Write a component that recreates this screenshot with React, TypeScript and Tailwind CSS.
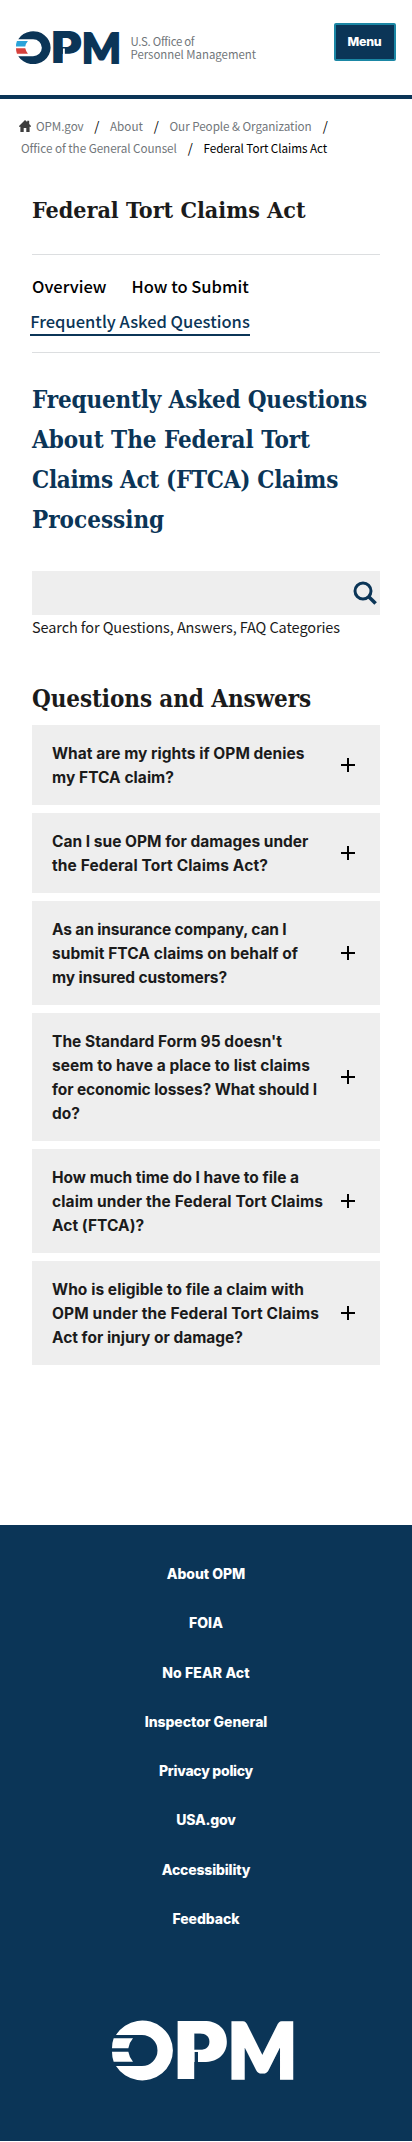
type LogoProps = { ink: string; letter: string; upper: string; lower: string; gap: string; className: string };

function OpmLogo({ ink, letter, upper, lower, gap, className }: LogoProps) {
  return (
    <svg viewBox="0 0 544 181" className={className} role="img" aria-label="OPM" preserveAspectRatio="none">
      <path className={ink} d="M12 45 A92 90 0 1 1 12 138 H90 A46.5 46.5 0 0 0 90 45 Z" />
      <path className={upper} d="M5 55 H63 Q51 69 49 85 H0 Q0 68 5 55 Z" />
      <path className={lower} d="M0 95 H49 Q52 112 63 125 H5 Q0 112 0 95 Z" />
      <g transform="translate(185 178) scale(1.06 1)">
        <text className={`${ink} font-['Inter',sans-serif] text-[238px] font-black`}>P</text>
      </g>
      <rect className={gap} x="248" y="96" width="10" height="85" />
      <g transform="translate(347 173) scale(0.965 1)">
        <text className={`${ink} ${letter} stroke-[11px] font-['Lato',sans-serif] text-[226px] font-black`}>M</text>
      </g>
    </svg>
  );
}

function HomeIcon() {
  return (
    <svg viewBox="0 0 12 12" className="h-3 w-3 fill-[#3d3d3d]" aria-hidden="true">
      <path d="M6 0 L8.2 2.1 V0.8 H10.2 V4 L12 5.9 V6.7 H10.6 V12 H7.3 V8 H4.7 V12 H1.4 V6.7 H0 V5.9 Z" />
    </svg>
  );
}

const Slash = () => <span className="w-[26.5px] text-center text-[13px] text-black">/</span>;

type Line = [string, string];

const questions: Line[][] = [
  [['What are my rights if OPM denies', 'tracking-[0.025px]'], ['my FTCA claim?', 'tracking-[0.04px]']],
  [['Can I sue OPM for damages under', 'tracking-normal'], ['the Federal Tort Claims Act?', 'tracking-[0.115px]']],
  [
    ['As an insurance company, can I', 'tracking-[-0.154px]'],
    ['submit FTCA claims on behalf of', 'tracking-[0.057px]'],
    ['my insured customers?', 'tracking-[-0.105px]'],
  ],
  [
    ["The Standard Form 95 doesn't", 'tracking-[0.033px]'],
    ['seem to have a place to list claims', 'tracking-[0.054px]'],
    ['for economic losses? What should I', 'tracking-[-0.099px]'],
    ['do?', 'tracking-normal'],
  ],
  [
    ['How much time do I have to file a', 'tracking-[-0.014px]'],
    ['claim under the Federal Tort Claims', 'tracking-[0.113px]'],
    ['Act (FTCA)?', 'tracking-[0.036px]'],
  ],
  [
    ['Who is eligible to file a claim with', 'tracking-[0.055px]'],
    ['OPM under the Federal Tort Claims', 'tracking-[0.127px]'],
    ['Act for injury or damage?', 'tracking-[-0.015px]'],
  ],
];

const footerLinks: Line[] = [
  ['About OPM', 'tracking-[-0.036px]'],
  ['FOIA', 'tracking-[0.052px]'],
  ['No FEAR Act', 'tracking-[0.11px]'],
  ['Inspector General', 'tracking-[-0.056px]'],
  ['Privacy policy', 'tracking-[-0.27px]'],
  ['USA.gov', 'tracking-[-0.188px]'],
  ['Accessibility', 'tracking-[-0.16px]'],
  ['Feedback', 'tracking-[-0.067px]'],
];

export default function App() {
  return (
    <div className="flex h-[2142px] w-[412px] flex-col overflow-hidden bg-white font-['Noto_Sans_CJK_SC','Open_Sans',sans-serif] text-[#1b1b1b]">
      <header className="flex h-[99px] shrink-0 items-start border-b-4 border-[#0b3557] pl-4">
        <OpmLogo
          ink="fill-[#0b3557]"
          letter="stroke-[#0b3557]"
          upper="fill-[#2ba3d9]"
          lower="fill-[#d6413c]"
          gap="fill-white"
          className="mt-[30.7px] h-[33px] w-[103px] overflow-visible"
        />
        <div className="mt-[34.6px] ml-[11.5px] w-[130px] whitespace-nowrap text-[11.4px] leading-[13px] text-[#71767a]">
          <div className="tracking-[-0.28px]">U.S. Office of</div>
          <div>Personnel Management</div>
        </div>
        <button className="mt-[23px] ml-[73px] h-[38px] w-[62px] rounded-[2px] border-2 border-[#1b87a5] bg-[#0b3557] font-['Inter',sans-serif] text-[12.4px] font-extrabold tracking-[-0.2px] text-white">
          Menu
        </button>
      </header>

      <nav className="flex flex-col pt-[15.5px] whitespace-nowrap text-[11.7px] leading-[22.3px] text-[#71767a]">
        <div className="flex items-center pl-[19px]">
          <HomeIcon />
          <a className="ml-[5px] w-[47.5px] tracking-[-0.12px]">OPM.gov</a>
          <Slash />
          <a className="w-[33px]">About</a>
          <Slash />
          <a className="w-[142.5px] tracking-[-0.06px]">Our People &amp; Organization</a>
          <Slash />
        </div>
        <div className="flex items-center pl-[21px]">
          <a className="w-[156px] tracking-[-0.05px]">Office of the General Counsel</a>
          <Slash />
          <span className="tracking-[-0.05px] text-black">Federal Tort Claims Act</span>
        </div>
      </nav>

      <main className="flex flex-col px-8 whitespace-nowrap">
        <h1 className="mt-[34.5px] font-['DejaVu_Serif_Condensed','DejaVu_Serif',serif] text-[23.1px] leading-8 font-bold">
          Federal Tort Claims Act
        </h1>
        <div className="mt-[28.9px] flex h-[98.5px] flex-col border-y border-[#dcdee0] pt-[13.5px] text-[16.5px] leading-[35.5px] font-medium text-black">
          <div className="flex gap-[25px]">
            <a>Overview</a>
            <a>How to Submit</a>
          </div>
          <a className="-ml-[1.8px] flex h-[32px] w-[220px] flex-col border-b-2 border-[#0b3557] text-[#0b3557]">
            Frequently Asked Questions
          </a>
        </div>

        <h2 className="mt-[27px] font-['DejaVu_Serif_Condensed','DejaVu_Serif',serif] text-[24px] leading-10 font-bold text-[#0b3557]">
          <span className="block tracking-[-0.175px]">Frequently Asked Questions</span>
          <span className="block tracking-[-0.054px]">About The Federal Tort</span>
          <span className="block tracking-[-0.308px]">Claims Act (FTCA) Claims</span>
          <span className="block">Processing</span>
        </h2>

        <div className="mt-[31px] flex h-11 items-center justify-end bg-[#eeeeee] pr-[3px]">
          <svg viewBox="0 0 24 24" className="h-6 w-6 fill-none stroke-[#0b3557]" aria-hidden="true">
            <circle cx="10" cy="10" r="8" strokeWidth="3" />
            <path d="M15.8 15.8 L22.6 22.6" strokeWidth="3.6" />
          </svg>
        </div>
        <p className="text-[14.5px] leading-6 tracking-[-0.093px]">Search for Questions, Answers, FAQ Categories</p>

        <h2 className="mt-[42px] font-['DejaVu_Serif_Condensed','DejaVu_Serif',serif] text-[24px] leading-9 font-bold tracking-[-0.1px]">
          Questions and Answers
        </h2>
        <div className="mt-2 flex flex-col gap-2 font-['Inter',sans-serif] text-[15.5px] leading-6 font-bold">
          {questions.map((lines) => (
            <div key={lines[0][0]} className="flex items-center justify-between bg-[#eeeeee] pr-[25px] pl-5">
              <div className="pt-[16.6px] pb-[15.4px]">
                {lines.map(([text, tracking]) => (
                  <div key={text} className={tracking}>{text}</div>
                ))}
              </div>
              <svg viewBox="0 0 14 14" className="h-3.5 w-3.5 stroke-black stroke-2" aria-hidden="true">
                <path d="M7 0 V14 M0 7 H14" />
              </svg>
            </div>
          ))}
        </div>
      </main>

      <footer className="mt-auto mb-[1.5px] flex h-[615.5px] shrink-0 flex-col items-center bg-[#0b3557] pt-6">
        <div className="flex flex-col items-center font-['Inter',sans-serif] text-[14px] leading-[49.25px] font-extrabold text-white">
          {footerLinks.map(([text, tracking]) => (
            <a key={text} className={tracking}>{text}</a>
          ))}
        </div>
        <OpmLogo
          ink="fill-white"
          letter="stroke-white"
          upper="fill-white"
          lower="fill-white"
          gap="fill-[#0b3557]"
          className="mt-[76.6px] -ml-[7px] h-[60.3px] w-[181.3px] overflow-visible"
        />
      </footer>
    </div>
  );
}
